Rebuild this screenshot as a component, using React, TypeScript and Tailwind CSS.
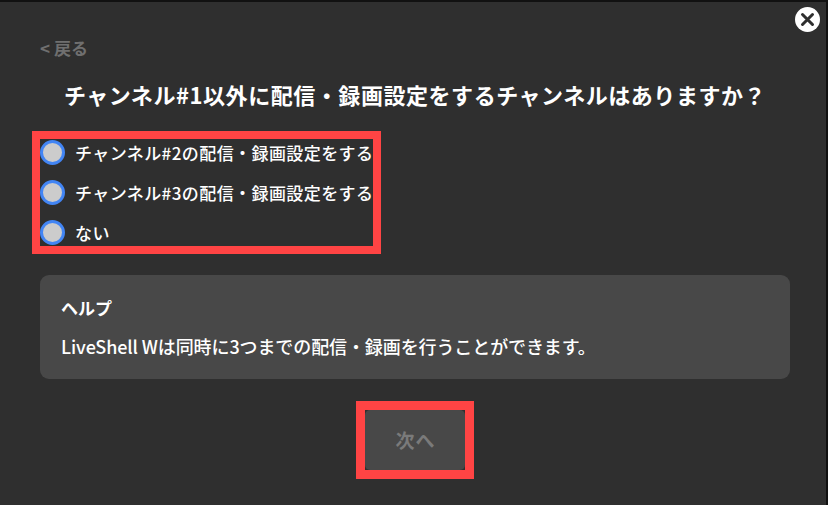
const FONT = "font-['Noto_Sans_CJK_JP','Noto_Sans',sans-serif]";

const OPTIONS = [
  "チャンネル#2の配信・録画設定をする",
  "チャンネル#3の配信・録画設定をする",
  "ない",
];

function CloseButton() {
  return (
    <button
      type="button"
      className="absolute right-[6px] top-[5px] flex h-[25px] w-[25px] items-center justify-center rounded-full bg-white"
    >
      <svg width="15" height="15" viewBox="0 0 15 15" fill="none">
        <path d="M2.5 2.5l10 10M12.5 2.5l-10 10" stroke="#2f2f2f" strokeWidth="3" strokeLinecap="round" />
      </svg>
    </button>
  );
}

function Radio({ label }: { label: string }) {
  return (
    <label className="flex h-[25px] items-center">
      <span className="h-[25px] w-[25px] shrink-0 rounded-full border-[3px] border-[#4285f4] bg-[#cccccc]" />
      <span className="ml-[10px] text-[17px] font-medium leading-[25px] tracking-[0.42px] text-white">{label}</span>
    </label>
  );
}

export default function App() {
  return (
    <div className={`${FONT} relative flex h-[505px] w-[828px] flex-col border-t-2 border-r-2 border-[#111111] bg-[#2f2f2f] pl-[40px] pr-[36px]`}>
      <CloseButton />

      <a className="mt-[35px] text-[17px] font-bold leading-[22px] text-[#6f6f6f]">&lt; 戻る</a>

      <h1 className="mt-[20px] text-center text-[22px] font-bold leading-[30px] tracking-[0.55px] text-white">
        チャンネル#1以外に配信・録画設定をするチャンネルはありますか？
      </h1>

      <div className="mt-[22px] self-start border-[8px] border-[#ff4444] -ml-[8px]">
        <div className="flex flex-col gap-[15px] py-[1px]">
          {OPTIONS.map((o) => (
            <Radio key={o} label={o} />
          ))}
        </div>
      </div>

      <section className="mt-[21px] h-[104px] rounded-[9px] bg-[#484848] px-[21px] pt-[21px]">
        <h2 className="text-[17px] font-bold leading-[24px] text-white">ヘルプ</h2>
        <p className="mt-[14px] text-[18px] font-medium leading-[24px] tracking-[-0.1px] text-white">
          LiveShell Wは同時に3つまでの配信・録画を行うことができます。
        </p>
      </section>

      <div className="mt-[22px] self-center border-[9px] border-[#ff4444]">
        <button
          type="button"
          className="flex h-[60px] w-[100px] items-center justify-center rounded-[5px] bg-[#484848] pl-[1px] text-[19px] font-bold tracking-[0.05em] text-[#7a7a7a]"
        >
          次へ
        </button>
      </div>
    </div>
  );
}
